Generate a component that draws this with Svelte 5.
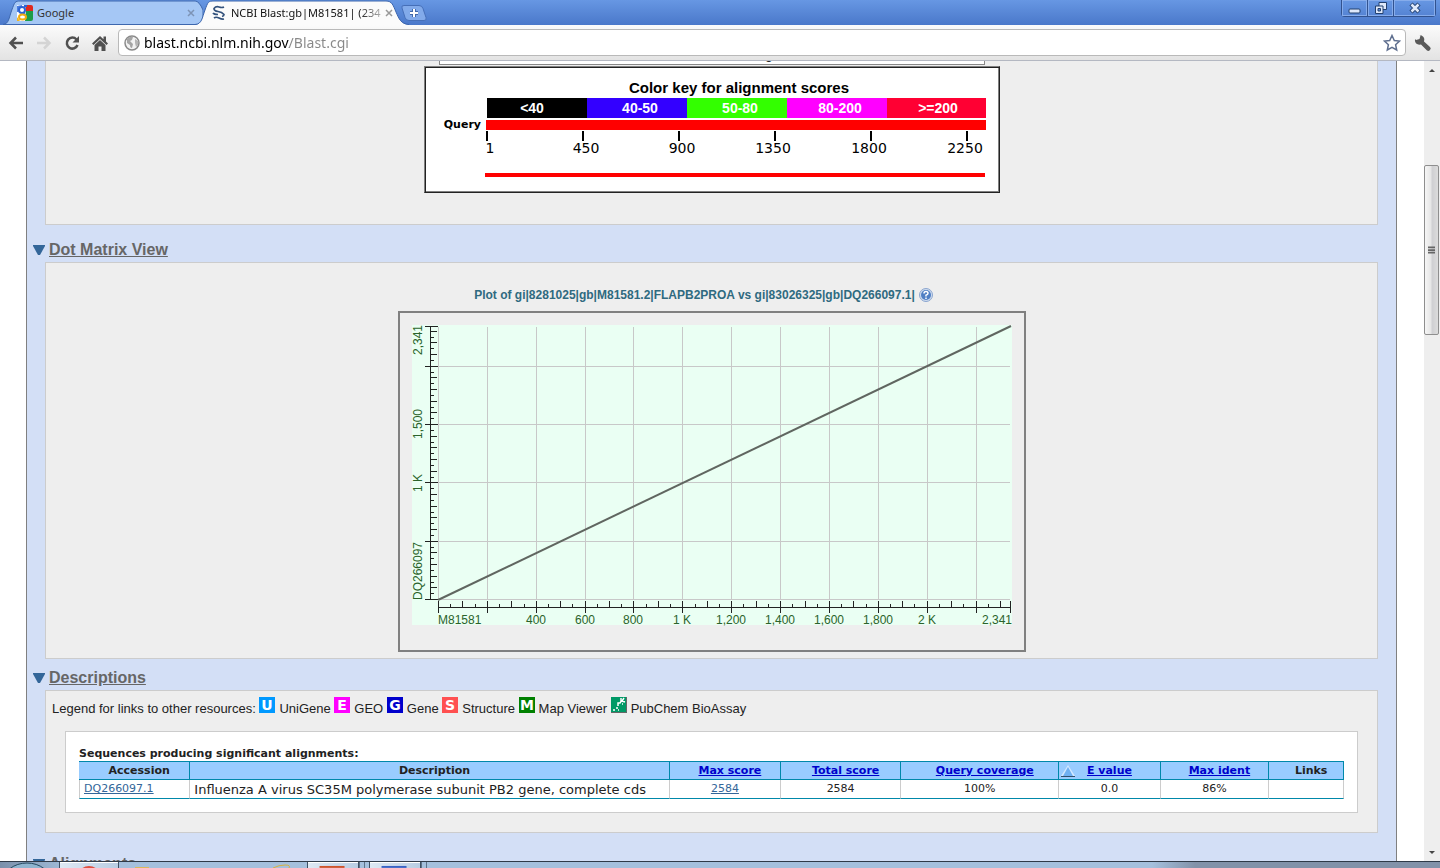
<script>
  let address = "blast.ncbi.nlm.nih.gov/Blast.cgi";
  let defline = "Mouse-over to show defline and scores, click to show alignments";

  const scoreKey = [
    { label: "<40", color: "#000000", center: 106 },
    { label: "40-50", color: "#3300ff", center: 214 },
    { label: "50-80", color: "#33ff00", center: 314 },
    { label: "80-200", color: "#ff00ff", center: 414 },
    { label: ">=200", color: "#ff0033", center: 512 },
  ];

  const queryTicks = [
    { label: "1", center: 64 },
    { label: "450", center: 160 },
    { label: "900", center: 256 },
    { label: "1350", center: 347 },
    { label: "1800", center: 443 },
    { label: "2250", center: 539 },
  ];

  // Dot plot: both sequences are 2341 bases long
  const length = 2341;
  const plot = { left: 26, right: 598, top: 1, bottom: 274 };

  const xPos = (n) => Math.round(plot.left + (n / length) * (plot.right - plot.left));
  const yPos = (n) => Math.round(plot.bottom - (n / length) * (plot.bottom - plot.top));

  const steps = [];
  for (let n = 0; n < length; n += 50) steps.push(n);

  const xGrid = steps.filter((n) => n % 200 === 0);
  const yGrid = steps.filter((n) => n % 500 === 0);

  const xTickTop = (n) => (n % 100 === 0 ? 276 : 279);
  const xTickBottom = (n) => (n % 200 === 0 ? 288 : 282);
  const yTickLeft = (n) => (n % 500 === 0 ? 13 : 18);
  const yTickRight = (n) => (n % 500 === 0 ? 26 : n % 100 === 0 ? 25 : 22);

  const xLabels = [
    [400, "400"],
    [600, "600"],
    [800, "800"],
    [1000, "1 K"],
    [1200, "1,200"],
    [1400, "1,400"],
    [1600, "1,600"],
    [1800, "1,800"],
    [2000, "2 K"],
  ];

  const resources = [
    { letter: "U", name: "UniGene", color: "#0099ff" },
    { letter: "E", name: "GEO", color: "#ff00ff" },
    { letter: "G", name: "Gene", color: "#0000cc" },
    { letter: "S", name: "Structure", color: "#ff5050" },
    { letter: "M", name: "Map Viewer", color: "#008000" },
    { letter: "", name: "PubChem BioAssay", color: "#009966" },
  ];

  const columns = [
    { title: "Accession", cls: "accession" },
    { title: "Description", cls: "description" },
    { title: "Max score", cls: "max-score", sortable: true },
    { title: "Total score", cls: "total-score", sortable: true },
    { title: "Query coverage", cls: "coverage", sortable: true },
    { title: "E value", cls: "e-value", sortable: true, sorted: true },
    { title: "Max ident", cls: "ident", sortable: true },
    { title: "Links", cls: "links" },
  ];

  const hits = [
    {
      accession: "DQ266097.1",
      description: "Influenza A virus SC35M polymerase subunit PB2 gene, complete cds",
      maxScore: "2584",
      totalScore: "2584",
      coverage: "100%",
      eValue: "0.0",
      ident: "86%",
    },
  ];
</script>

{#snippet heading(title)}
  <h2>
    <svg class="toggle" viewBox="0 0 12 11" aria-hidden="true">
      <path d="M0 0h12v1L7 10H5L0 1z" fill="#336699" />
    </svg>
    <a href="#top">{title}</a>
  </h2>
{/snippet}

<div class="browser">
  <header class="tab-strip">
    <div class="tab">
      <svg class="tab-shape" viewBox="0 0 204 25" preserveAspectRatio="none" aria-hidden="true">
        <path d="M0 24.5C6 24 6 18 9 10S12 1 18 1H196Q200 1 204 10V24.5z" fill="#a5c7f5" stroke="#3d66ad" />
      </svg>
      <svg class="favicon" viewBox="0 0 16 16" aria-hidden="true">
        <path d="M0 0h9v16H0z" fill="#fff" />
        <path d="M8 0h6q2 0 2 2v4H9z" fill="#e02a1e" />
        <path d="M9 6h7v8q0 2-2 2H8z" fill="#1c9c4a" />
        <path d="M0 1l5-1v4L1 7H0z" fill="#4d7fe0" />
        <path d="M0 12l3 4H0z" fill="#f2b51d" />
        <circle cx="5" cy="5" r="3" fill="#fff" stroke="#2c64d4" stroke-width="2" />
        <path d="M7 1h3M5 8q3 1 3 3" fill="none" stroke="#2c64d4" stroke-width="2" />
        <ellipse cx="5.500" cy="12" rx="3.500" ry="2.500" fill="#fff" stroke="#f0ac12" stroke-width="2" />
      </svg>
      <span class="tab-title">Google</span>
      <button class="tab-close" aria-label="Close Google">
        <svg viewBox="0 0 8 8"><path d="M1 1l6 6M7 1L1 7" stroke="#7d93b5" stroke-width="1.500" /></svg>
      </button>
    </div>
    <div class="tab active">
      <svg class="tab-shape" viewBox="0 0 214 25" preserveAspectRatio="none" aria-hidden="true">
        <path d="M0 25C7 24 7 18 10 10S13 1 19 1H191C197 1 198 5 201 12S206 24 214 25z" fill="#fbfbfb" />
        <path d="M0 24.5C7 24 7 18 10 10S13 1 19 1H191C197 1 198 5 201 12S206 24 214 24.5" fill="none" stroke="#3d66ad" />
      </svg>
      <svg class="favicon" viewBox="0 0 16 16" aria-hidden="true">
        <path d="M13 2Q11 3 8 2T3 3.500Q3 6 7 6.500T13 9.500Q13 11 11 11.500" fill="none" stroke="#33527c" stroke-width="1.700" />
        <path d="M2 8Q3 9.500 7 9.500M3 13Q5 11.500 8 13T13 14" fill="none" stroke="#33527c" stroke-width="1.700" />
      </svg>
      <span class="tab-title">NCBI Blast:gb|M81581| (234</span>
      <button class="tab-close" aria-label="Close NCBI Blast">
        <svg viewBox="0 0 8 8"><path d="M1 1l6 6M7 1L1 7" stroke="#999" stroke-width="1.500" /></svg>
      </button>
    </div>
    <button class="new-tab" aria-label="New tab">
      <svg viewBox="0 0 26 16">
        <path d="M3 .5h15q3 0 4 3l3 9q1 3-2 3H8q-3 0-4-3L1 3Q0 .5 3 .5z" fill="#82aaea" stroke="#466fb8" />
        <path d="M9 8h8M13 4v8" stroke="#4169aa" stroke-width="4" />
        <path d="M9 8h8M13 4v8" stroke="#fff" stroke-width="2" />
      </svg>
    </button>
    <div class="window-buttons">
      <button aria-label="Minimize">
        <svg viewBox="0 0 14 14"><rect x="1" y="8" width="11" height="4" rx="1" fill="#dfe9fb" stroke="#23406f" /></svg>
      </button>
      <button aria-label="Restore">
        <svg viewBox="0 0 14 14" fill="#dfe9fb" stroke="#23406f">
          <path d="M5 1.500h7.500v7H5z" />
          <path d="M1.500 5H9v7.500H1.500z" />
          <path d="M4 7.500h2.500V10H4z" fill="#5d8bdc" />
        </svg>
      </button>
      <button class="close" aria-label="Close">
        <svg viewBox="0 0 14 14">
          <path d="M3 3l8 8M11 3l-8 8" stroke="#23406f" stroke-width="4.500" />
          <path d="M3.500 3.500l7 7M10.500 3.500l-7 7" stroke="#dfe9fb" stroke-width="2.500" />
        </svg>
      </button>
    </div>
  </header>

  <nav class="toolbar">
    <button aria-label="Back">
      <svg viewBox="0 0 16 16"><path d="M15 8H3M8 2.500L2.500 8 8 13.500" fill="none" stroke="#505050" stroke-width="2.500" /></svg>
    </button>
    <button aria-label="Forward" disabled>
      <svg viewBox="0 0 16 16"><path d="M1 8h12M8 2.500L13.500 8 8 13.500" fill="none" stroke="#d4d4d4" stroke-width="2.500" /></svg>
    </button>
    <button aria-label="Reload">
      <svg viewBox="0 0 16 16">
        <path d="M12.500 4.500A5.500 5.500 0 1 0 13.500 10" fill="none" stroke="#505050" stroke-width="2.500" />
        <path d="M15 1v6.500H8.500z" fill="#505050" />
      </svg>
    </button>
    <button aria-label="Home">
      <svg viewBox="0 0 16 16" fill="#505050">
        <path d="M8 1L0 8.500 1.500 10 8 4l6.500 6L16 8.500l-2-2V1.500h-2.500v2.700z" />
        <path d="M2.500 10L8 5l5.500 5v6h-4v-4.500h-3V16h-4z" />
      </svg>
    </button>
    <div class="omnibox">
      <svg class="globe" viewBox="0 0 16 16" aria-hidden="true">
        <circle cx="8" cy="8" r="7" fill="#f2f2f2" stroke="#8a8a8a" stroke-width="1.500" />
        <path d="M3 4q3-3 6-2L8 5l-2 1 3 3-1 4q-2 0-2-3L3 8z" fill="#a5a5a5" />
        <path d="M11 4l3 2v4l-2 2-1-4z" fill="#b5b5b5" />
      </svg>
      <input class="address" type="text" aria-label="Address" spellcheck="false" bind:value={address} />
      <button aria-label="Bookmark this page">
        <svg viewBox="0 0 18 18">
          <path d="M9 1.500l2.300 5 5.200.6-3.900 3.600 1.100 5.300L9 13.400 4.300 16l1.100-5.300L1.500 7.100l5.200-.6z" fill="#fff" stroke="#5f6f8f" stroke-width="1.500" />
        </svg>
      </button>
    </div>
    <button class="wrench" aria-label="Customize and control">
      <svg viewBox="0 0 18 18">
        <path d="M6.500 1.500l-1 3.500-3.500 1-1-1Q.5 8.500 3 10q2 1 4 .5l6 6q1.500 1 3-.5t0-3l-6-5.500Q11 5 9.500 3T5 1z" fill="#5a5a5a" />
      </svg>
    </button>
  </nav>

  <div class="viewport">
    <main id="top">
      <section class="panel graphic">
        <input class="defline" type="text" aria-label="Defline" bind:value={defline} />
        <div class="key-frame">
          <svg width="572" height="123" viewBox="0 0 572 123" role="img" aria-label="Color key for alignment scores">
            <text class="key-title" x="313" y="25">Color key for alignment scores</text>
            {#each scoreKey as band, i}
              <rect x={61 + i * 100} y="30" width={i === 4 ? 99 : 100} height="20" fill={band.color} />
              <text class="key-label" x={band.center} y="45">{band.label}</text>
            {/each}
            <text class="query" x="55" y="60">Query</text>
            <rect x="60" y="52" width="500" height="10" fill="#f00" />
            {#each queryTicks as tick, i}
              <rect x={60 + i * 96} y="63" width="2" height="10" />
              <text class="query-tick" x={tick.center} y="85">{tick.label}</text>
            {/each}
            <rect x="59" y="105" width="500" height="4" fill="#f00" />
          </svg>
        </div>
      </section>

      {@render heading("Dot Matrix View")}
      <section class="panel dot-matrix">
        <h3>
          Plot of gi|8281025|gb|M81581.2|FLAPB2PROA vs gi|83026325|gb|DQ266097.1|
          <a href="#top" aria-label="Help">
            <svg viewBox="0 0 14 14">
              <circle cx="7" cy="7" r="6.500" fill="#cfdcef" stroke="#8aa5cf" />
              <circle cx="7" cy="7" r="5" fill="#4f7fc4" />
              <path d="M5 5.500Q5 3.500 7 3.500T9 5.300Q9 6.500 7 7.200V8.500M7 9.500V11" fill="none" stroke="#fff" stroke-width="1.500" />
            </svg>
          </a>
        </h3>
        <div class="plot-frame">
          <svg class="plot" width="600" height="300" viewBox="0 0 600 300" role="img" aria-label="Dot matrix plot">
            <rect width="600" height="300" fill="#eafff3" />
            <g fill="#c8c8c8">
              {#each xGrid as n}
                <rect x={xPos(n)} y="2" width="1" height="273" />
              {/each}
              {#each yGrid as n}
                <rect x={plot.left} y={yPos(n)} width="572" height="1" />
              {/each}
            </g>
            <g fill="#222">
              <rect x="18" y="1" width="1" height="274" />
              <rect x="13" y="1" width="13" height="1" />
              {#each steps as n}
                <rect x={yTickLeft(n)} y={yPos(n)} width={yTickRight(n) - yTickLeft(n)} height="1" />
              {/each}
              <rect x="26" y="282" width="573" height="1" />
              <rect x="598" y="276" width="1" height="12" />
              {#each steps as n}
                <rect x={xPos(n)} y={xTickTop(n)} width="1" height={xTickBottom(n) - xTickTop(n)} />
              {/each}
            </g>
            <path d="M26 275L599 1" stroke="#606660" stroke-width="2" />
            <g class="axis">
              <text x="26" y="299">M81581</text>
              {#each xLabels as [n, label]}
                <text class="mid" x={xPos(n)} y="299">{label}</text>
              {/each}
              <text class="end" x="600" y="299">2,341</text>
              <text transform="translate(10 275) rotate(-90)">DQ266097</text>
              <text class="mid" transform="translate(10 158) rotate(-90)">1 K</text>
              <text class="mid" transform="translate(10 99) rotate(-90)">1,500</text>
              <text class="end" transform="translate(10 0) rotate(-90)">2,341</text>
            </g>
          </svg>
        </div>
      </section>

      {@render heading("Descriptions")}
      <section class="panel descriptions">
        <p class="legend">
          Legend for links to other resources:
          {#each resources as resource}
            <svg class="resource" viewBox="0 0 16 16" aria-hidden="true">
              <rect width="16" height="16" fill={resource.color} />
              {#if resource.letter}
                <text x="8" y="13">{resource.letter}</text>
              {:else}
                <path d="M0 15.500h15.500V0" fill="none" stroke="#666" />
                <path d="M2 13h2M5 11h2M7 9V6h2l2-3M10 1v4M13 1l-2 3 3 1M7 13h1M11 7h1" fill="none" stroke="#fff" stroke-width="1.500" />
              {/if}
            </svg>
            {resource.name}{" "}
          {/each}
        </p>
        <div class="hits">
          <table>
            <caption>Sequences producing significant alignments:</caption>
            <thead>
              <tr>
                {#each columns as column}
                  <th class={column.cls} scope="col">
                    {#if column.sorted}
                      <svg class="sort" viewBox="0 0 14 12" aria-hidden="true">
                        <path d="M7 0l7 11H0z" fill="#d3e8ff" />
                        <path d="M7 2l5 9H2z" fill="#6fb0f2" />
                        <path d="M0 11.500h14" stroke="#33506e" />
                      </svg>
                    {/if}
                    {#if column.sortable}
                      <a href="#top">{column.title}</a>
                    {:else}
                      {column.title}
                    {/if}
                  </th>
                {/each}
              </tr>
            </thead>
            <tbody>
              {#each hits as hit}
                <tr>
                  <td class="accession"><a href="#top">{hit.accession}</a></td>
                  <td class="description">{hit.description}</td>
                  <td><a href="#top">{hit.maxScore}</a></td>
                  <td>{hit.totalScore}</td>
                  <td>{hit.coverage}</td>
                  <td>{hit.eValue}</td>
                  <td>{hit.ident}</td>
                  <td></td>
                </tr>
              {/each}
            </tbody>
          </table>
        </div>
      </section>

      {@render heading("Alignments")}
    </main>

    <div class="scrollbar" aria-hidden="true">
      <svg class="arrow" viewBox="0 0 16 17"><path d="M5 11h6L8 8z" fill="#444" /></svg>
      <div class="before"></div>
      <div class="thumb">
        <svg viewBox="0 0 8 9"><path d="M0 1h8M0 4h8M0 7h8" stroke="#666" stroke-width="2" /></svg>
      </div>
      <div class="after"></div>
      <svg class="arrow" viewBox="0 0 16 17"><path d="M5 7h6l-3 3z" fill="#444" /></svg>
    </div>
  </div>

  <footer class="taskbar">
    <button class="start" aria-label="Start">
      <svg viewBox="0 0 54 6"><ellipse cx="27" cy="20" rx="24" ry="19" fill="#8fb4cf" stroke="#24485f" /></svg>
    </button>
    <button class="task chrome" aria-label="Chrome">
      <svg viewBox="0 0 58 6"><ellipse cx="29" cy="12" rx="10" ry="8" fill="#e0503f" /></svg>
    </button>
    <button class="pinned" aria-label="Explorer">
      <svg viewBox="0 0 180 6">
        <path d="M12 5h14v1H12z" fill="#dbb75c" />
        <path d="M150 6q6-3 12-3t4 3" fill="none" stroke="#d9b13c" />
      </svg>
    </button>
    <button class="task" aria-label="PowerPoint">
      <svg viewBox="0 0 52 6"><path d="M12 4h26v2H12z" fill="#d0532b" /></svg>
    </button>
    <span class="stack"></span>
    <button class="task" aria-label="Word">
      <svg viewBox="0 0 52 6"><path d="M12 4h26v2H12z" fill="#3a62c4" /></svg>
    </button>
    <span class="stack"></span>
  </footer>
</div>

<style>
  :global(body) {
    margin: 0;
    overflow: hidden;
  }

  .browser {
    display: flex;
    flex-direction: column;
    height: 100vh;
    font-family: "Liberation Sans", Arial, sans-serif;
    color: #222;
  }

  button {
    display: flex;
    align-items: center;
    justify-content: center;
    margin: 0;
    padding: 0;
    border: none;
    background: none;
  }

  svg {
    flex-shrink: 0;
  }

  .tab-strip {
    display: flex;
    flex-shrink: 0;
    height: 25px;
    padding-left: 3px;
    background: linear-gradient(#6797e3, #4a78ca);
  }

  .tab {
    position: relative;
    display: flex;
    align-items: center;
    gap: 4px;
    box-sizing: border-box;
    width: 200px;
    padding: 1px 8px 0 14px;
    font-family: "Noto Sans", "Open Sans", sans-serif;
    font-size: 11px;
    color: #333;
  }

  .tab.active {
    width: 214px;
    margin-left: -8px;
    padding: 1px 20px 0 16px;
    color: #111;
  }

  .tab-shape {
    position: absolute;
    top: 0;
    left: 0;
    width: 100%;
    height: 25px;
  }

  .favicon {
    position: relative;
    width: 16px;
    height: 16px;
  }

  .tab-title {
    position: relative;
    flex: 1;
    line-height: 18px;
    white-space: nowrap;
  }

  .active .tab-title {
    mask-image: linear-gradient(to right, #000 85%, rgba(0, 0, 0, 0.3));
  }

  .tab-close {
    position: relative;
  }

  .tab-close svg {
    width: 8px;
    height: 8px;
  }

  .new-tab {
    width: 26px;
    height: 26px;
    margin-left: -8px;
  }

  .new-tab svg {
    width: 26px;
    height: 16px;
  }

  .window-buttons {
    display: flex;
    height: 16px;
    margin-left: auto;
    margin-right: 4px;
    border: 1px solid #31528f;
    border-top: none;
    border-radius: 0 0 4px 4px;
  }

  .window-buttons button {
    width: 26px;
    box-shadow: inset 0 0 0 1px #86aceb;
    border-right: 1px solid #31528f;
  }

  .window-buttons .close {
    width: 41px;
    border-right: none;
  }

  .window-buttons svg {
    width: 14px;
    height: 14px;
  }

  .toolbar {
    display: flex;
    flex-shrink: 0;
    align-items: center;
    gap: 12px;
    height: 35px;
    padding: 0 8px;
    background: linear-gradient(#fbfbfb, #e3e3e3);
    border-bottom: 1px solid #b4b8c2;
  }

  .toolbar svg {
    width: 16px;
    height: 16px;
  }

  .omnibox {
    display: flex;
    flex: 1;
    align-items: center;
    gap: 4px;
    height: 25px;
    padding: 0 4px 0 5px;
    margin: 0 -4px 0 -2px;
    background: #fff;
    border: 1px solid #b9b9b9;
    border-radius: 4px;
  }

  .address {
    flex: 1;
    min-width: 0;
    padding: 0;
    border: none;
    outline: none;
    font-family: "Noto Sans", "Open Sans", sans-serif;
    font-size: 14px;
    line-height: 20px;
    /* host in black, path in grey */
    color: transparent;
    background: linear-gradient(to right, #000 145px, #888 145px);
    background-clip: text;
  }

  .toolbar .omnibox button svg,
  .toolbar .wrench svg {
    width: 18px;
    height: 18px;
  }

  .viewport {
    display: flex;
    flex: 1;
    min-height: 0;
    overflow: hidden;
    background: #fff;
  }

  main {
    flex: 1;
    min-width: 0;
    margin: 0 27px 0 26px;
    padding: 0 18px;
    background: #d3dff6;
    border: solid #808080;
    border-width: 0 1px;
  }

  .panel {
    background: #eee;
    border: 1px solid #ccc;
  }

  .graphic {
    display: flex;
    flex-direction: column;
    align-items: center;
    gap: 1px;
    padding-bottom: 31px;
    border-top: none;
  }

  .defline {
    box-sizing: border-box;
    width: 546px;
    height: 22px;
    margin-top: -18px;
    padding: 1px 2px;
    border: 1px solid #888;
    background: #fff;
    font-family: "Liberation Sans", Arial, sans-serif;
    font-size: 13px;
  }

  .key-frame {
    border: 1px solid;
    border-color: #808080 #222 #222 #808080;
    background: #fff;
    box-shadow:
      inset 1px 1px #222,
      inset -1px -1px #808080;
    padding: 1px;
  }

  .key-frame svg,
  .plot {
    display: block;
    overflow: visible;
  }

  .key-title,
  .key-label {
    font-size: 14px;
    font-weight: bold;
    text-anchor: middle;
  }

  .key-title {
    font-size: 15px;
    fill: #000;
  }

  .key-label {
    fill: #fff;
  }

  .query {
    font-family: "DejaVu Sans", sans-serif;
    font-size: 11px;
    font-weight: bold;
    text-anchor: end;
  }

  .query-tick {
    font-family: "DejaVu Sans", sans-serif;
    font-size: 14px;
    text-anchor: middle;
  }

  h2 {
    display: flex;
    align-items: center;
    gap: 4px;
    margin: 0 0 0 -12px;
    padding: 9px 0 2px;
    font-size: 16px;
    line-height: 20px;
  }

  .graphic + h2 {
    padding-top: 15px;
  }

  .descriptions + h2 {
    padding-top: 21px;
  }

  h2 a {
    color: #666;
  }

  .toggle {
    width: 12px;
    height: 11px;
  }

  .dot-matrix {
    display: flex;
    flex-direction: column;
    align-items: center;
    padding: 23px 0 6px;
  }

  h3 {
    display: flex;
    align-items: center;
    gap: 4px;
    margin: 0 0 7px;
    padding-right: 16px;
    font-size: 12px;
    line-height: 18px;
    color: #2f6a80;
  }

  h3 a {
    display: flex;
  }

  h3 svg {
    width: 14px;
    height: 14px;
  }

  .plot-frame {
    padding: 12px 12px 25px;
    border: 2px solid #808080;
  }

  .axis {
    font-size: 12px;
    fill: #2b632b;
  }

  .mid {
    text-anchor: middle;
  }

  .end {
    text-anchor: end;
  }

  .descriptions {
    padding: 0 19px 19px;
  }

  .legend {
    margin: 0 0 0 -13px;
    padding: 6px 0 12px;
    font-size: 13px;
    line-height: 20px;
  }

  .resource {
    width: 16px;
    height: 16px;
    margin-right: 4px;
  }

  .resource text {
    font-family: "DejaVu Sans", sans-serif;
    font-size: 14px;
    font-weight: bold;
    text-anchor: middle;
    fill: #fff;
  }

  .hits {
    padding: 14px 13px 13px;
    background: #fff;
    border: 1px solid #ccc;
  }

  table {
    width: 100%;
    table-layout: fixed;
    border-spacing: 0;
    font-family: "DejaVu Sans", Verdana, sans-serif;
    font-size: 11px;
    line-height: 15px;
  }

  caption {
    font-weight: bold;
    text-align: left;
  }

  th {
    position: relative;
    box-sizing: border-box;
    height: 19px;
    padding: 0 0 0 10px;
    background: #99ccff;
    border: solid #0088aa;
    border-width: 1px 1px 1px 0;
  }

  th a {
    color: #0000cc;
  }

  th.accession { width: 8.8%; }
  th.description { width: 37.9%; }
  th.max-score { width: 8.8%; }
  th.total-score { width: 9.5%; }
  th.coverage { width: 12.5%; }
  th.e-value { width: 8%; padding-left: 0; }
  th.ident { width: 8.6%; }

  .sort {
    position: absolute;
    top: 3px;
    left: 2px;
    width: 14px;
    height: 12px;
  }

  td {
    box-sizing: border-box;
    height: 19px;
    padding: 0;
    text-align: center;
    vertical-align: top;
    line-height: 18px;
    border: solid;
    border-width: 0 1px 1px 0;
    border-color: #ccc #ccc #0088aa;
  }

  td a {
    color: #336699;
  }

  td.accession {
    padding-left: 4px;
    border-left: 1px solid #ccc;
    text-align: left;
  }

  td.description {
    padding: 2px 0 0 4px;
    font-size: 13px;
    line-height: 16px;
    text-align: left;
    white-space: nowrap;
  }

  .scrollbar {
    display: flex;
    flex-direction: column;
    width: 16px;
    background: #eee;
  }

  .arrow {
    width: 16px;
    height: 17px;
  }

  .before { flex: 87; }
  .after { flex: 510; }

  .thumb {
    display: flex;
    flex: 169;
    align-items: center;
    justify-content: center;
    margin-right: 1px;
    background: linear-gradient(to right, #f6f6f6, #e6e6e6 45%, #cfcfd2 55%, #dcdcdc);
    border: 1px solid #8e8e8e;
    border-radius: 2px;
    box-sizing: border-box;
  }

  .thumb svg {
    width: 7px;
    height: 9px;
  }

  .taskbar {
    display: flex;
    flex-shrink: 0;
    box-sizing: border-box;
    height: 7px;
    background: linear-gradient(to right, #7b90ab, #a5c0dd 5%, #a5c0dd 80%, #8292a9 83%, #8292a9);
    border-top: 1px solid #2f3a48;
    overflow: hidden;
  }

  .taskbar svg {
    width: 100%;
    height: 6px;
  }

  .start {
    width: 54px;
    margin-right: 5px;
  }

  .task {
    width: 52px;
    background: linear-gradient(to right, #dfe9f4, #b9cde3);
    border: solid #3f5063;
    border-width: 0 1px;
    box-shadow: inset 0 1px #fff;
  }

  .chrome {
    width: 60px;
  }

  .pinned {
    width: 188px;
  }

  .stack {
    box-sizing: border-box;
    width: 6px;
    margin-right: 4px;
    border: solid #5d7289;
    border-width: 0 1px;
  }
</style>
